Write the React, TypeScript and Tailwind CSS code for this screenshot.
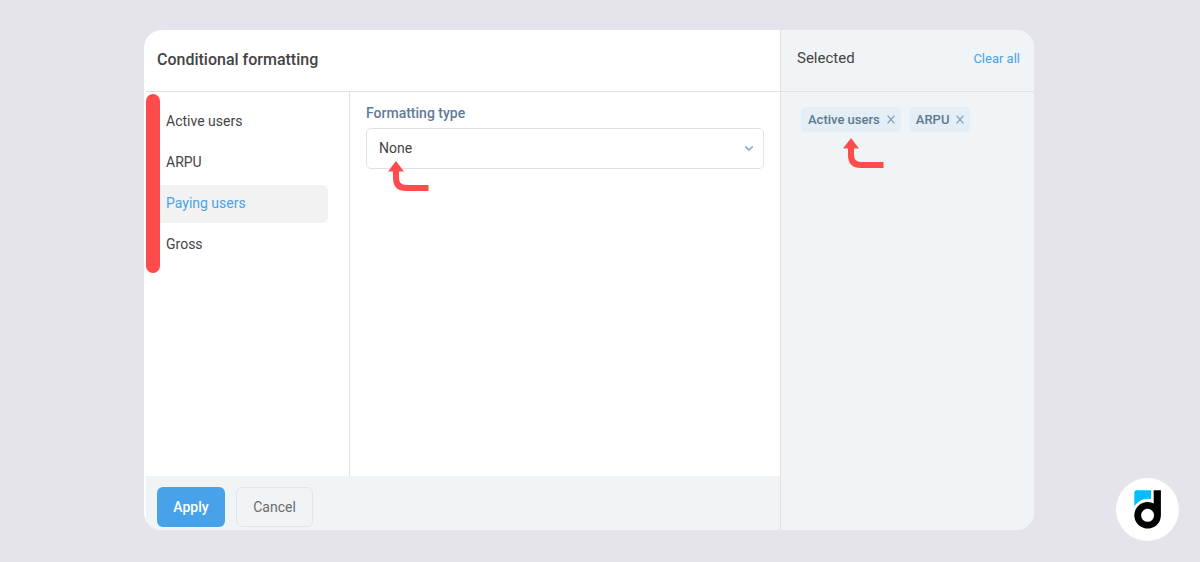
import { useState } from "react";
import clsx from "clsx";

const metrics = ["Active users", "ARPU", "Paying users", "Gross"];

const HintArrow = ({ className }: { className: string }) => (
  <svg
    className={clsx("pointer-events-none absolute", className)}
    width="41"
    height="31"
    viewBox="0 0 41 31"
    fill="none"
    aria-hidden="true"
  >
    <path d="M8 0 L16 10.5 H0 Z" fill="#ff4b4b" />
    <path d="M8 9 V17 Q8 27 18 27 H40.5" stroke="#ff4b4b" strokeWidth="6" />
  </svg>
);

const Logo = () => (
  <div className="absolute right-[21px] bottom-[21px] size-[63px] rounded-full bg-white">
    <svg width="63" height="63" viewBox="0 0 63 63" aria-hidden="true">
      <path
        d="M18.3 28 V14.8 Q18.3 12.3 20.8 12.3 H35 V21 A16.5 16.5 0 0 0 18.3 28 Z"
        fill="#00bfff"
      />
      <path
        fillRule="evenodd"
        d="M37.7 12.3 H44.9 V37.3 A13.3 13.3 0 1 1 37.7 25.5 Z M31.6 30.8 A6.5 6.5 0 1 0 31.6 43.8 A6.5 6.5 0 1 0 31.6 30.8 Z"
        fill="#000"
      />
    </svg>
  </div>
);

const App = () => {
  const [active, setActive] = useState("Paying users");
  const [selected, setSelected] = useState(["Active users", "ARPU"]);

  return (
    <div className="relative flex min-h-screen bg-[#e5e4ea] pt-[30px] pr-[166px] pb-8 pl-36 font-[Roboto,sans-serif] text-[#444]">
      <div className="flex flex-1 overflow-hidden rounded-[18px] bg-white">
        <main className="flex flex-1 flex-col pl-0.5">
          <header className="flex h-[62px] items-center border-b border-[#e0e2e6] pb-0.5 pl-[11px]">
            <h1 className="text-base font-medium text-[#444]">
              Conditional formatting
            </h1>
          </header>

          <div className="flex flex-1">
            <nav className="relative flex w-[204px] flex-col gap-[3px] border-r border-[#e0e2e6] pt-[11px] pr-[21px]">
              <div className="absolute top-0.5 left-0 h-[179px] w-3.5 rounded-full bg-[#ff4b4b]"></div>
              {metrics.map((metric) => (
                <button
                  key={metric}
                  type="button"
                  onClick={() => setActive(metric)}
                  className={clsx(
                    "h-[38px] rounded-md pb-0.5 pl-5 text-left text-sm",
                    metric === active && "bg-[#f2f2f2] text-[#48a2e9]"
                  )}
                >
                  {metric}
                </button>
              ))}
            </nav>

            <section className="flex-1 px-4 pt-[11px]">
              <label
                htmlFor="formatting-type"
                className="block text-sm leading-5 font-medium text-[#5d7c98]"
              >
                Formatting type
              </label>
              <div className="relative mt-[5px]">
                <select
                  id="formatting-type"
                  className="block h-[41px] w-full appearance-none rounded-[5px] border border-[#e0e2e8] bg-white px-3 pb-0.5 text-sm"
                >
                  <option>None</option>
                </select>
                <svg
                  className="pointer-events-none absolute top-[17px] right-2.5"
                  width="10"
                  height="7"
                  viewBox="0 0 10 7"
                  fill="none"
                  stroke="#8fb0cf"
                  strokeWidth="1.8"
                  aria-hidden="true"
                >
                  <path d="M1.2 1.4 L5 5 L8.8 1.4" />
                </svg>
                <HintArrow className="top-[33px] left-[22px]" />
              </div>
            </section>
          </div>

          <footer className="flex h-[54px] items-center gap-[11px] bg-[#f0f4f7] pt-2.5 pb-0.5 pl-[11px]">
            <button
              type="button"
              className="h-10 w-[68px] rounded-md bg-[#48a2e9] text-sm font-medium text-white"
            >
              Apply
            </button>
            <button
              type="button"
              className="h-10 w-[77px] rounded-md border border-[#e2e4e8] text-sm text-[#6c6c6c]"
            >
              Cancel
            </button>
          </footer>
        </main>

        <aside className="w-[254px] border-l border-[#e0e2e6] bg-[#f0f4f7]">
          <div className="flex h-[62px] items-center justify-between border-b border-[#e0e2e6] pr-3.5 pb-1 pl-4">
            <h2 className="text-[15px]">Selected</h2>
            <button
              type="button"
              onClick={() => setSelected([])}
              className="text-[13px] text-[#48a2e9]"
            >
              Clear all
            </button>
          </div>
          <div className="relative flex flex-wrap gap-2 px-5 pt-[15px]">
            {selected.map((name) => (
              <span
                key={name}
                className="flex h-[25px] items-center gap-[7px] rounded-[5px] bg-[#e3eef7] pr-1.5 pl-[7px] text-[13px] font-medium text-[#5f7a8c]"
              >
                {name}
                <button
                  type="button"
                  aria-label={`Remove ${name}`}
                  onClick={() => setSelected(selected.filter((s) => s !== name))}
                >
                  <svg
                    width="8"
                    height="9"
                    viewBox="0 0 8 9"
                    stroke="#7f9bb3"
                    strokeWidth="1.2"
                    aria-hidden="true"
                  >
                    <path d="M0.6 0.6 L7.4 8.4 M7.4 0.6 L0.6 8.4" />
                  </svg>
                </button>
              </span>
            ))}
            <HintArrow className="top-[46px] left-[62px]" />
          </div>
        </aside>
      </div>
      <Logo />
    </div>
  );
};

export default App;
